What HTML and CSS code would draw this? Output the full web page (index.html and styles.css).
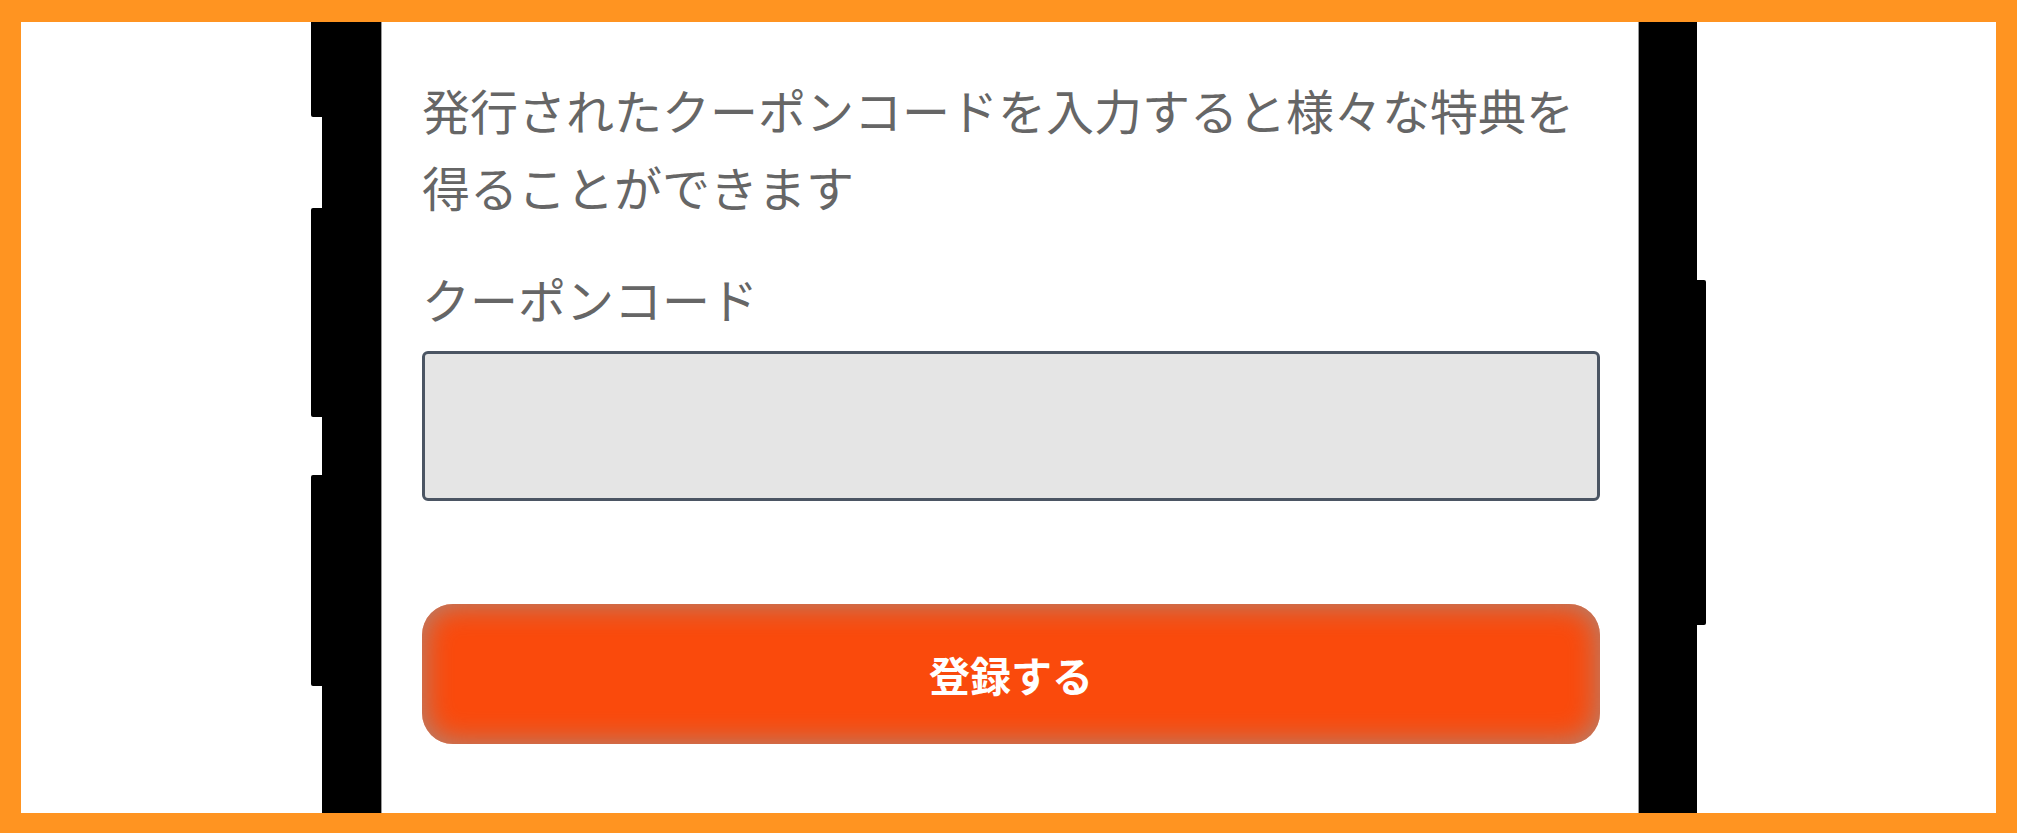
FILE: index.html
```html
<!DOCTYPE html>
<html lang="ja">
<head>
    <meta charset="UTF-8">
    <title>クーポンコード</title>
    <link rel="stylesheet" href="styles.css">
</head>
<body>
<div class="page">
    <div class="phone">
        <!--側面ボタン-->
        <span class="side-btn left top"></span>
        <span class="side-btn left mid"></span>
        <span class="side-btn left low"></span>
        <span class="side-btn right"></span>

        <p class="lead">発行されたクーポンコードを入力すると様々な特典を<br>得ることができます</p>
        <label class="field-label" for="code">クーポンコード</label>
        <input class="code-input" id="code" type="text">
        <button class="submit" type="button">登録する</button>
    </div>
</div>
</body>
</html>
```

FILE: styles.css
```css
* {
    padding: 0;
    margin: 0;
    box-sizing: border-box;
}

body {
    background: #fff;
    font-family: "Noto Sans CJK JP", "Noto Sans", sans-serif;
}

.page {
    width: 2017px;
    height: 833px;
    border: 21px solid #ff9421;
    border-top-width: 22px;
    border-bottom-width: 20px;
    padding-left: 301px;
    display: flex;
    overflow: hidden;
}

.phone {
    position: relative;
    width: 1375px;
    border-left: 59px solid #000;
    border-right: 58px solid #000;
    background: #fff;
    box-shadow: inset 1px 0 #9a9a9a, inset -1px 0 #9a9a9a;
    padding: 49px 39px 0 41px;
    display: flex;
    flex-direction: column;
}

.side-btn {
    position: absolute;
    background: #000;
}

.side-btn.left {
    left: -70px;
    width: 12px;
    border-radius: 2px 0 0 2px;
}

.side-btn.top {
    top: -4px;
    height: 99px;
}

.side-btn.mid {
    top: 186px;
    height: 209px;
}

.side-btn.low {
    top: 453px;
    height: 211px;
}

.side-btn.right {
    right: -67px;
    width: 10px;
    top: 258px;
    height: 345px;
    border-radius: 0 2px 2px 0;
}

.lead {
    font-size: 48px;
    line-height: 77px;
    color: #666;
}

.field-label {
    display: block;
    margin-top: 43px;
    font-size: 48px;
    line-height: 60px;
    color: #666;
}

.code-input {
    display: block;
    width: 100%;
    height: 150px;
    margin-top: 23px;
    border: 3px solid #4b5563;
    border-radius: 6px;
    background: #e5e5e5;
    font-family: inherit;
    font-size: 40px;
    outline: none;
}

.submit {
    display: block;
    width: 100%;
    height: 140px;
    margin-top: 103px;
    border: 0;
    border-radius: 31px;
    background: #fa4a0c;
    box-shadow: inset 0 0 30px rgba(150, 150, 150, 0.85);
    color: #fff;
    font-family: inherit;
    font-size: 41px;
    font-weight: bold;
    cursor: pointer;
}
```
